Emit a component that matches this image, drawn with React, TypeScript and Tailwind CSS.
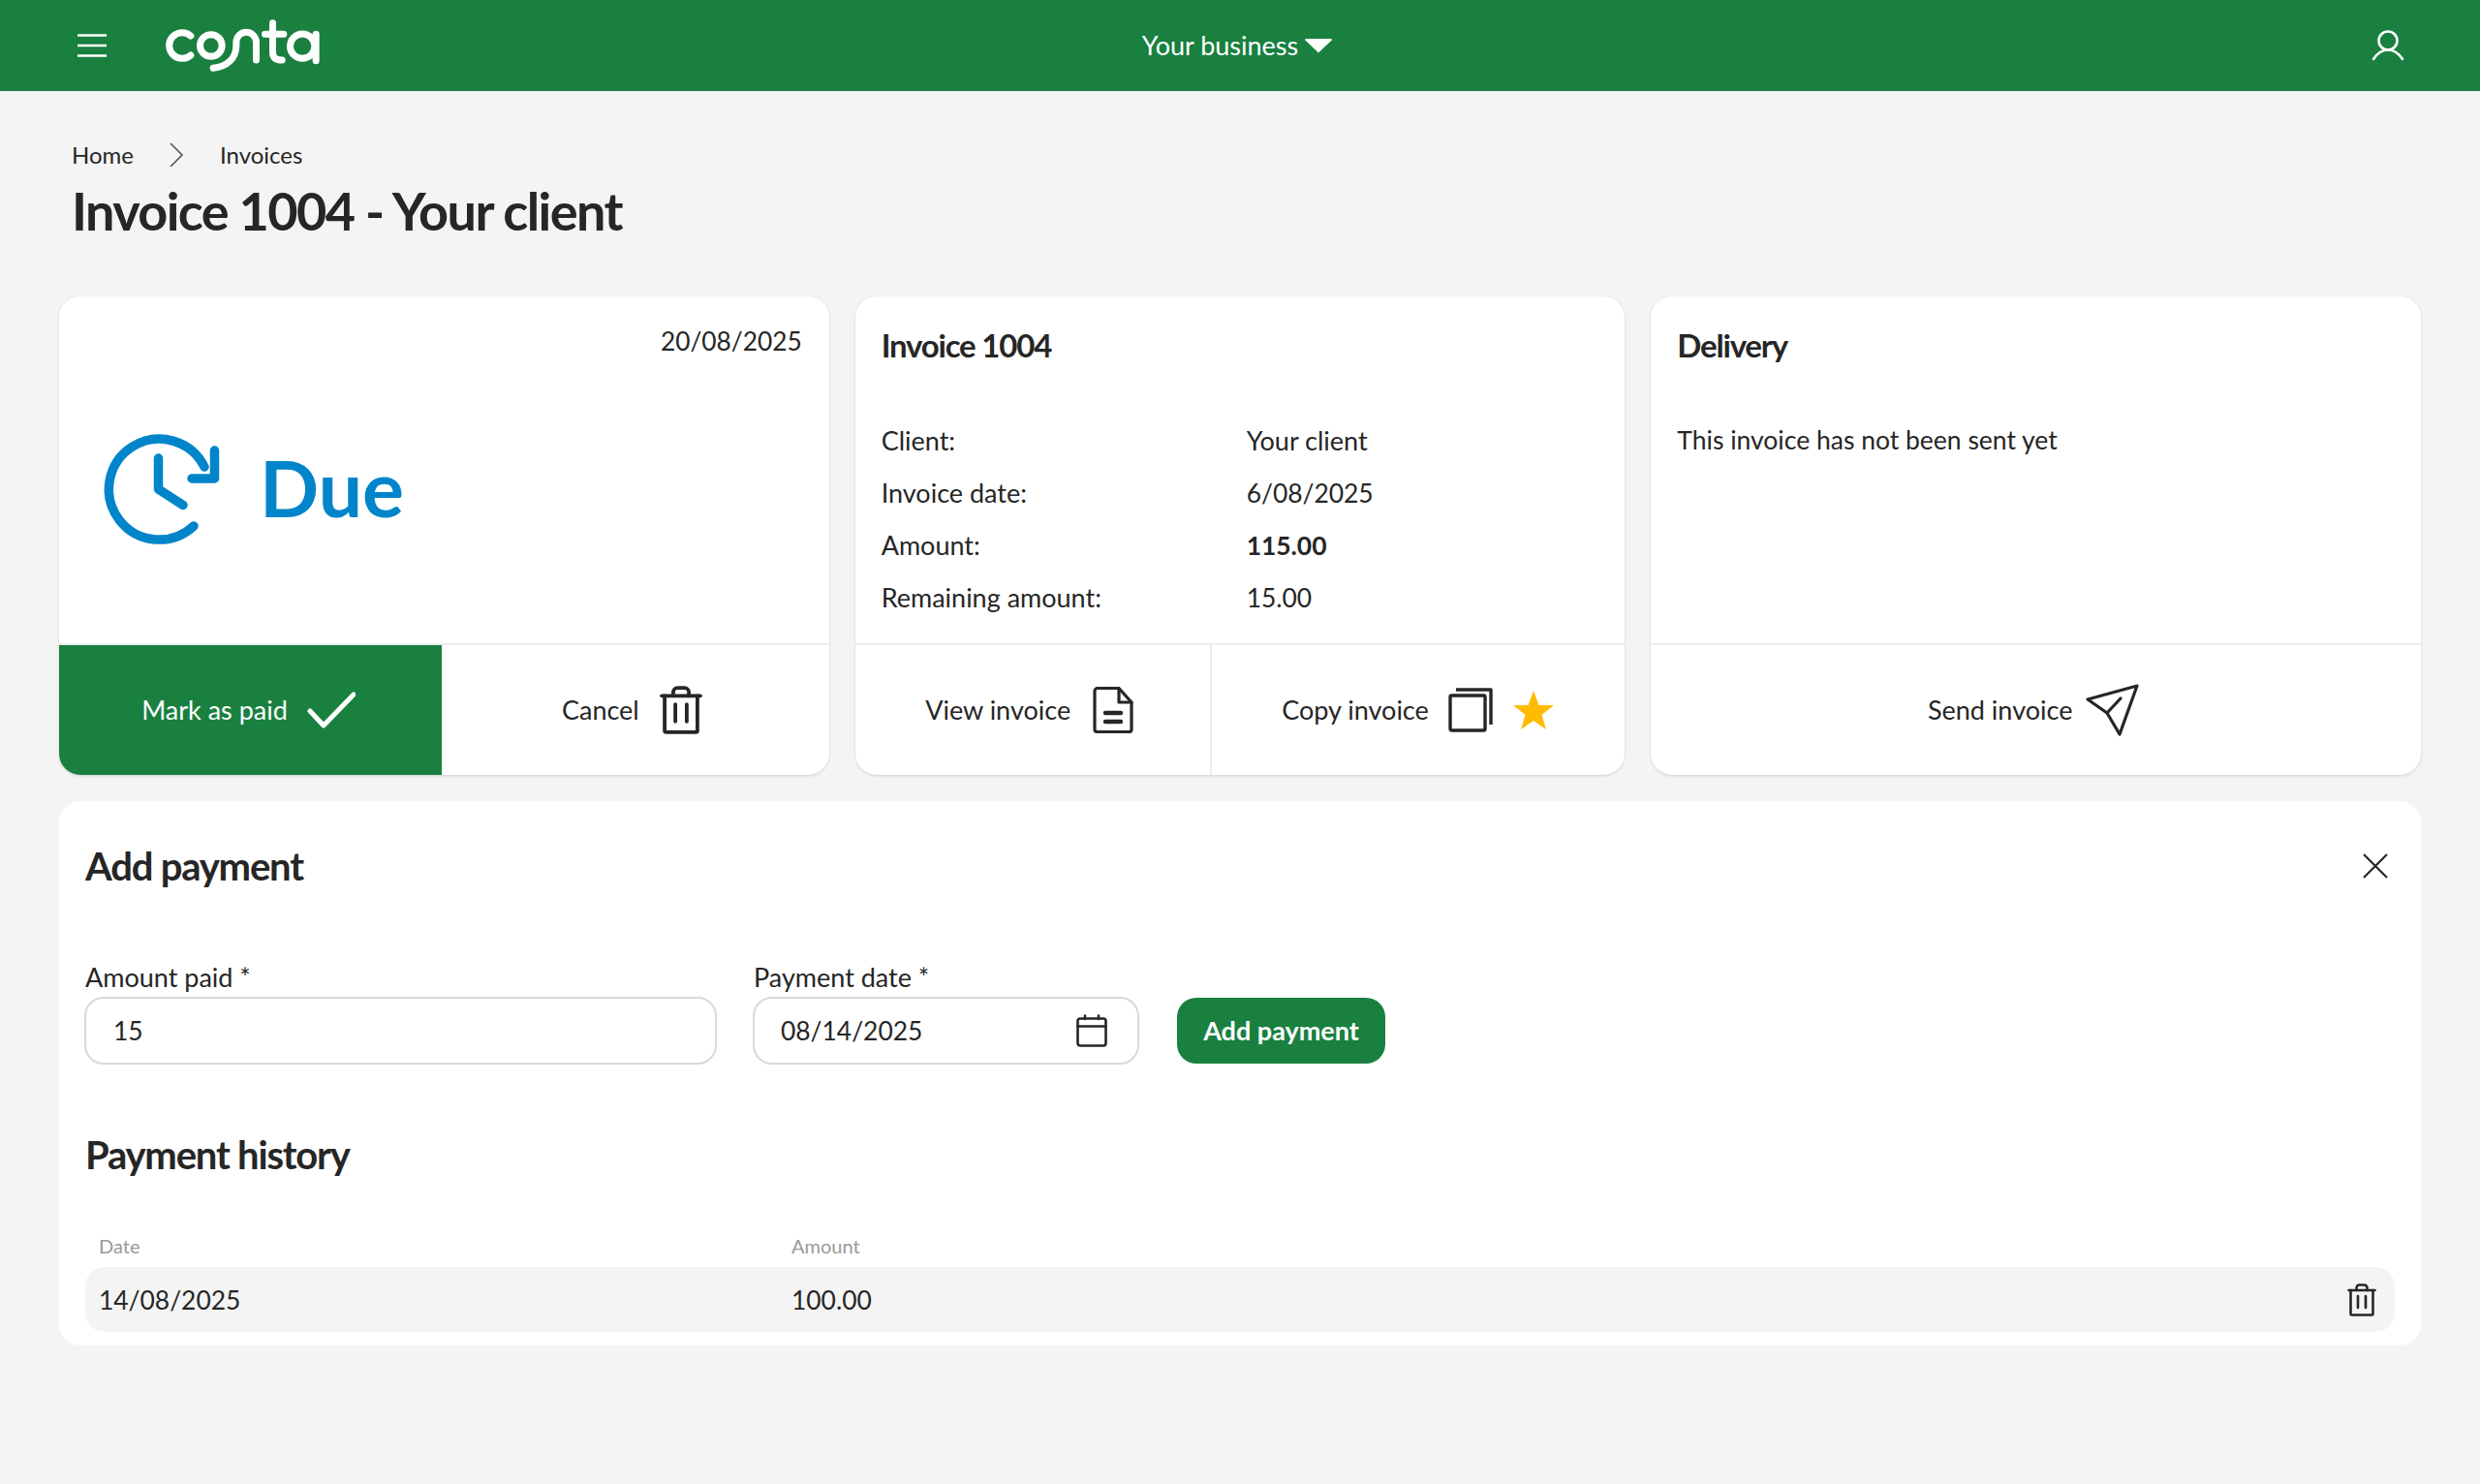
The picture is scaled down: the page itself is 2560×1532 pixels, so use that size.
import React from "react";

const Trash = ({ className }: { className: string }) => (
  <svg viewBox="0 0 30 34" fill="none" stroke="currentColor" strokeWidth="2.6" strokeLinecap="round" strokeLinejoin="round" className={className}>
    <path d="M1.5 7H28.5" />
    <path d="M3.5 7V31.5a1 1 0 0 0 1 1H25.5a1 1 0 0 0 1-1V7" />
    <path d="M9.5 7V4.5a3 3 0 0 1 3-3h5a3 3 0 0 1 3 3V7" />
    <path d="M11 13V25M19 13V25" />
  </svg>
);

const Cell = ({ children, className = "" }: { children: React.ReactNode; className?: string }) => (
  <div className={`flex items-center justify-center ${className}`}>{children}</div>
);

const Row = ({ label, value, bold }: { label: string; value: string; bold?: boolean }) => (
  <div className="flex h-[54px] items-center">
    <div className="w-[377px]">{label}</div>
    <div className={bold ? "text-[26.4px] font-bold" : value === "Your client" ? "" : "text-[26.4px]"}>{value}</div>
  </div>
);

export default function App() {
  return (
    <div className="min-h-[1532px] bg-[#f4f4f4] text-[27px] leading-[32px] text-[#262626] [font-family:Lato,sans-serif]">
      <header className="flex h-[94px] items-center justify-between bg-[#198040] pl-[80px] pr-[78px] text-white">
        <div className="flex w-[592px] items-center gap-[56px]">
          <svg viewBox="0 0 30 24" className="h-[24px] w-[30px]" stroke="currentColor" strokeWidth="2.6" fill="none">
            <path d="M0 1.5H30M0 12H30M0 22.5H30" />
          </svg>
          <svg viewBox="50 35 500 180" className="h-[60px] w-[167px]" fill="none" stroke="currentColor" strokeWidth="21" strokeLinecap="round">
            <path d="M142 95A40 40 0 1 0 142 155" />
            <circle cx="205" cy="125" r="34" />
            <path d="M212 195C255 190 283 165 283 125V115A31 31 0 0 1 345 115V170" />
            <path d="M396 55V145C396 162 405 170 425 170M372 90H430" />
            <circle cx="488" cy="127" r="38" />
            <path d="M530 90V172" />
          </svg>
        </div>
        <div className="flex items-center gap-[7px]">
          <span>Your business</span>
          <svg viewBox="0 0 28 16" className="h-[16px] w-[28px]" fill="currentColor">
            <path d="M1 1H27a1 1 0 0 1 .7 1.6L14 15.5 .3 2.6A1 1 0 0 1 1 1Z" />
          </svg>
        </div>
        <div className="flex w-[600px] justify-end">
          <svg viewBox="0 0 34 32" className="h-[32px] w-[34px]" fill="none" stroke="currentColor" strokeWidth="2.6" strokeLinecap="round">
            <circle cx="17" cy="11" r="9.5" />
            <path d="M2 30C6 24 11 20.5 17 20.5S28 24 32 30" />
          </svg>
        </div>
      </header>

      <div className="px-[74px] pt-[52px]">
        <div className="flex h-[28px] items-center text-[24px]">
          <span>Home</span>
          <svg viewBox="0 0 16 26" className="ml-[36px] mr-[37px] h-[26px] w-[16px]" fill="none" stroke="#555" strokeWidth="1.6">
            <path d="M2 1L14 13L2 25" />
          </svg>
          <span>Invoices</span>
        </div>
        <h1 className="mt-[12px] text-[54px] font-bold leading-[64px] tracking-[-1.6px]">Invoice 1004 - Your client</h1>
      </div>

      <div className="flex gap-[27px] px-[61px] pt-[56px]">
        <section className="flex h-[494px] flex-1 flex-col overflow-hidden rounded-[22px] bg-white shadow-[0_1px_3px_rgba(0,0,0,0.15)]">
          <div className="h-[360px] border-b-2 border-[#ececec] px-[28px] pt-[30px]">
            <div className="text-right text-[26.3px]">20/08/2025</div>
            <div className="mt-[80px] flex items-center gap-[41px] pl-[18px] text-[#0085ca]">
              <svg viewBox="0 0 120 115" className="h-[115px] w-[120px]" fill="none" stroke="currentColor" strokeWidth="9.5" strokeLinecap="round" strokeLinejoin="round">
                <path d="M104 34A52 52 0 1 0 93 95" />
                <path d="M114.5 17V46H91" />
                <path d="M56.5 25V57L82 73.5" />
              </svg>
              <span className="pb-[6px] text-[80.5px] font-bold leading-[90px]">Due</span>
            </div>
          </div>
          <div className="flex flex-1">
            <Cell className="w-[395px] gap-[20px] bg-[#198040] pr-[4px] text-white">
              <span>Mark as paid</span>
              <svg viewBox="0 0 50 38" className="h-[38px] w-[50px]" fill="none" stroke="currentColor" strokeWidth="5" strokeLinecap="round" strokeLinejoin="round">
                <path d="M3 20L17 35L48 3" />
              </svg>
            </Cell>
            <Cell className="flex-1 gap-[20px] pr-[6px]">
              <span>Cancel</span>
              <Trash className="h-[50px] w-[46px]" />
            </Cell>
          </div>
        </section>

        <section className="flex h-[494px] flex-1 flex-col overflow-hidden rounded-[22px] bg-white shadow-[0_1px_3px_rgba(0,0,0,0.15)]">
          <div className="h-[360px] border-b-2 border-[#ececec] px-[27px] pt-[30px]">
            <h2 className="text-[33px] font-bold leading-[40px] tracking-[-1.2px]">Invoice 1004</h2>
            <div className="mt-[52px]">
              <Row label="Client:" value="Your client" />
              <Row label="Invoice date:" value="6/08/2025" />
              <Row label="Amount:" value="115.00" bold />
              <Row label="Remaining amount:" value="15.00" />
            </div>
          </div>
          <div className="flex flex-1">
            <Cell className="w-[368px] gap-[23px] border-r-2 border-[#ececec] pr-[6px]">
              <span>View invoice</span>
              <svg viewBox="0 0 42 48" className="h-[48px] w-[42px]" fill="none" stroke="currentColor" strokeWidth="3.2" strokeLinejoin="round" strokeLinecap="round">
                <path d="M5 1.5H27L40 16V44a2.5 2.5 0 0 1-2.5 2.5H4.5A2.5 2.5 0 0 1 2 44V4.5A3 3 0 0 1 5 1.5Z" />
                <path d="M27 2V16H40" />
                <path d="M13 27H29M13 36H29" strokeWidth="4.4" />
              </svg>
            </Cell>
            <Cell className="flex-1 gap-[20px]">
              <span>Copy invoice</span>
              <svg viewBox="0 0 46 46" className="h-[46px] w-[46px]" fill="none" stroke="currentColor" strokeWidth="3.4" strokeLinejoin="round">
                <rect x="2" y="8" width="36" height="36" rx="1.5" />
                <path d="M8 2H44V38" />
              </svg>
              <svg viewBox="0 0 44 40" className="h-[40px] w-[44px]" fill="#ffbb00">
                <path d="M22 0L27.5 15H43L30.5 25L35 40L22 31L9 40L13.5 25L1 15H16.5Z" />
              </svg>
            </Cell>
          </div>
        </section>

        <section className="flex h-[494px] flex-1 flex-col overflow-hidden rounded-[22px] bg-white shadow-[0_1px_3px_rgba(0,0,0,0.15)]">
          <div className="h-[360px] border-b-2 border-[#ececec] px-[27px] pt-[30px]">
            <h2 className="text-[33px] font-bold leading-[40px] tracking-[-1.2px]">Delivery</h2>
            <p className="mt-[62px] text-[26.5px]">This invoice has not been sent yet</p>
          </div>
          <Cell className="flex-1 gap-[13px] pr-[5px]">
            <span>Send invoice</span>
            <svg viewBox="0 0 56 54" className="h-[54px] w-[56px]" fill="none" stroke="currentColor" strokeWidth="3.2" strokeLinejoin="round" strokeLinecap="round">
              <path d="M54 2L3 16L23 30L36 52Z" />
              <path d="M23 30L37 15" />
            </svg>
          </Cell>
        </section>
      </div>

      <section className="mx-[61px] mt-[27px] h-[562px] rounded-[22px] bg-white px-[27px] pt-[45px]">
        <div className="flex items-center justify-between pr-[6px]">
          <h2 className="text-[40px] font-bold leading-[44px] tracking-[-1.2px]">Add payment</h2>
          <svg viewBox="0 0 28 28" className="h-[28px] w-[28px]" fill="none" stroke="currentColor" strokeWidth="2.2">
            <path d="M2 2L26 26M26 2L2 26" />
          </svg>
        </div>
        <div className="mt-[73px] flex items-end">
          <label className="-ml-[1px] block w-[653px]">
            <span className="block pl-[1px] leading-[40px]">Amount paid *</span>
            <div className="flex h-[70px] items-center rounded-[20px] border-2 border-[#d9d9d9] pl-[28px] text-[26.4px]">15</div>
          </label>
          <label className="ml-[37px] block w-[399px]">
            <span className="block pl-[1px] leading-[40px]">Payment date *</span>
            <div className="flex h-[70px] items-center justify-between rounded-[20px] border-2 border-[#d9d9d9] pl-[27px] pr-[31px] text-[26.4px]">
              <span>08/14/2025</span>
              <svg viewBox="0 0 32 34" className="h-[34px] w-[32px]" fill="none" stroke="currentColor" strokeWidth="2.6" strokeLinecap="round">
                <rect x="1.5" y="4.5" width="29" height="28" rx="2.5" />
                <path d="M1.5 12.5H30.5M9 1.5V5M23 1.5V5" />
              </svg>
            </div>
          </label>
          <button className="mb-[1px] ml-[39px] h-[68px] w-[215px] rounded-[20px] bg-[#198040] font-bold text-white">Add payment</button>
        </div>
        <h2 className="mt-[70px] text-[40px] font-bold leading-[46px] tracking-[-1.2px]">Payment history</h2>
        <div className="mt-[59px] flex pl-[14px] text-[20px] leading-[24px] text-[#9a9a9a]">
          <div className="w-[715px]">Date</div>
          <div>Amount</div>
        </div>
        <div className="mt-[10px] flex h-[67px] items-center rounded-[20px] bg-[#f4f4f4] pl-[14px] pr-[19px] text-[26.4px]">
          <div className="w-[715px]">14/08/2025</div>
          <div className="flex-1">100.00</div>
          <Trash className="h-[34px] w-[30px]" />
        </div>
      </section>
    </div>
  );
}
